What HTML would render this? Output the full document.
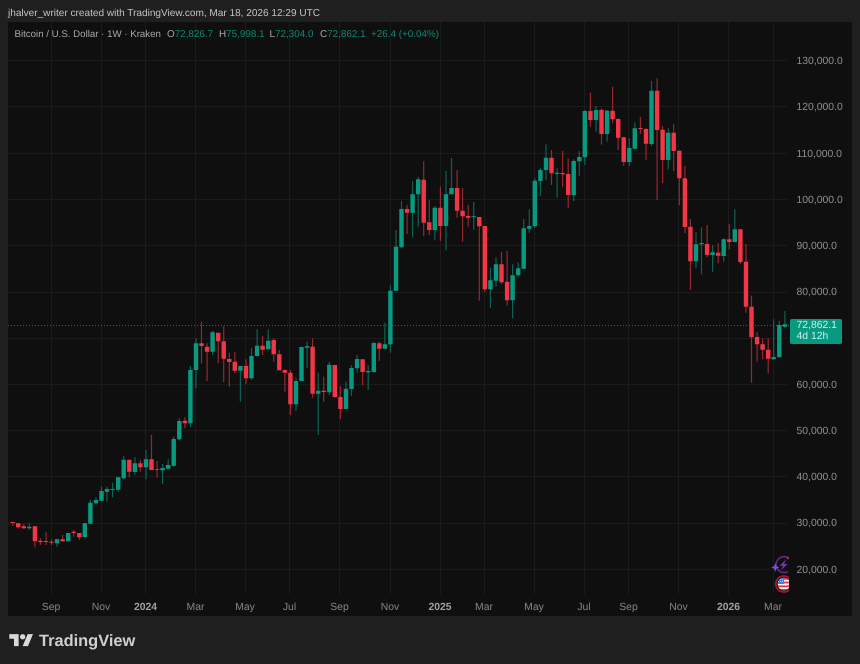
<!DOCTYPE html>
<html>
<head>
<meta charset="utf-8">
<style>
html,body{margin:0;padding:0;background:#1f1f1f;}
#root{position:relative;width:860px;height:664px;overflow:hidden;background:#1f1f1f;font-family:"Liberation Sans",sans-serif;text-rendering:geometricPrecision;}
#pane{position:absolute;left:8px;top:22px;width:844px;height:594px;background:#0f0f0f;}
svg{position:absolute;left:0;top:0;filter:blur(.35px);}
.t{position:absolute;white-space:nowrap;filter:blur(.3px);}
.top{left:8px;top:6.5px;font-size:10.05px;line-height:13px;color:#c4c4c4;}
.lg{top:28px;font-size:9.9px;line-height:13px;color:#a8a8a8;}
.g{color:#0a8a75;}
.p{left:796.5px;font-size:10.4px;line-height:13px;color:#8e8e8e;}
.x{top:601px;font-size:10.4px;line-height:13px;color:#858585;width:50px;text-align:center;}
.x b{color:#a0a0a0;}
#tag{position:absolute;left:789.5px;top:318.5px;width:52.5px;height:25px;background:#089981;border-radius:2px;}
.tg{left:796.5px;font-size:10.4px;line-height:12px;color:#c9efe6;}
#brand{left:39px;top:630.5px;font-size:16.4px;line-height:20px;font-weight:bold;color:#cfcfcf;}
</style>
</head>
<body>
<div id="root">
<div id="pane"></div>

<svg width="860" height="664" viewBox="0 0 860 664" xmlns="http://www.w3.org/2000/svg">
  <g stroke="#1b1b1b" stroke-width="1" fill="none">
    <path d="M51.5 22V594M101.5 22V594M145.5 22V594M195.5 22V594M245.5 22V594M289.5 22V594M339.5 22V594M390.5 22V594M440.5 22V594M484.5 22V594M534.5 22V594M584.5 22V594M628.5 22V594M678.5 22V594M728.5 22V594M773.5 22V594"/>
    <path d="M8 60.5H787M8 106.5H787M8 153.5H787M8 199.5H787M8 245.5H787M8 292.5H787M8 338.5H787M8 384.5H787M8 430.5H787M8 476.5H787M8 523.5H787M8 569.5H787"/>
  </g>
  <path d="M8 325.5H790" stroke="#0d7564" stroke-width="1" stroke-dasharray="1 2" fill="none"/>

  <!-- green wicks -->
  <path stroke="#089981" stroke-opacity=".6" stroke-width="1.2" fill="none" d="M29.3 523.3V530M57 539V546.7M68.2 533V541.3M84.8 523V537.3M90.4 500V524M96 497.3V504M101.5 486.7V501M107 486.7V501.7M112.6 482.7V497.3M118.2 477V491.7M123.7 455.7V479.3M134.9 457.3V475M146 450V479.3M162.6 464V484M168.2 459.3V469M173.7 436.7V466.7M179.3 418.3V440M190.4 366V426.7M196 338.3V388.3M212.6 330.7V355M240.4 366V401.7M251.5 347.7V380M257.1 329.3V356M268.2 329.3V349.3M296 378.3V411M301.5 347V381M307.1 341.7V368.3M318.2 372.7V435M329.3 361.7V395M346 381.7V409M351.5 365V396M357.1 355V372.7M368.2 365V390M373.8 341.7V372.7M384.9 322.7V348.7M390.4 285.3V352.7M396 230V290.7M401.5 201V248.3M412.6 181V237.3M418.2 176.7V226.7M434.8 206V240M446 171V250.3M451.5 158V194.3M473.7 202V230M490.4 267.7V307.7M496 257.3V286.7M512.6 264.3V318.3M518.2 262.3V276.7M523.7 219V268.7M529.3 209.3V232.7M534.8 178.3V228.3M540.4 168.3V196M546 144.3V180M557.1 168.3V197.7M573.7 159.3V201M579.3 151V176M584.8 110V165M596 106V131.7M607.1 110V141.7M629.3 138.3V166M634.8 122.3V149.3M651.5 81V146M668.2 128.3V169.3M696 232.3V268.3M701.5 227.3V274.3M712.6 245V271.7M723.7 238.3V261.7M734.8 209.3V242M773.7 319.3V360M779.3 320.7V357.3M784.9 311V328.3"/>
  <!-- red wicks -->
  <path stroke="#f23645" stroke-opacity=".6" stroke-width="1.2" fill="none" d="M12.7 522V526M18.2 523V528.7M23.8 524V529M34.9 526V547.3M40.4 538.3V545M46 531.7V545M51.5 539.3V545M62.6 535V541.7M73.7 530V536.7M79.3 533V540M129.3 459.7V477.3M140.4 460V471.7M151.5 435V470M157.1 461V477.3M184.9 417.3V428.3M201.5 321.7V363.3M207.1 343.3V381M218.2 332.7V363.3M223.7 326V382.3M229.3 352.7V386.7M234.8 351.7V373.3M246 359.3V384M262.6 336V355M273.7 338.3V361.7M279.3 350V370.3M284.9 369.3V391.7M290.4 370V415M312.6 338.3V397.7M323.7 376.7V401.7M334.8 365V397.7M340.4 386V419M362.6 359.3V385.3M379.3 341.7V361M407.1 205V234M423.7 161.3V236M429.3 200V235M440.4 186.7V241M457.1 170V217.7M462.6 188.3V241.7M468.2 205V226.7M479.3 217V300.7M484.8 226V291.7M501.5 251.7V284.3M507.1 250.7V305.7M551.5 150V185M562.6 151V186.7M568.2 158.3V207.7M590.4 92.7V126.7M601.5 108.3V144.7M612.6 86.7V123.3M618.2 118.3V150M623.7 136.7V166M640.4 116.7V134M646 128.3V160M657.1 78.3V200M662.6 126V183.3M673.7 124.3V171M679.3 150.7V205M684.9 166V233M690.4 219V290M707.1 225V257.3M718.2 243.3V263.3M729.3 224V249.3M740.4 229.3V264.3M746 244V312.7M751.5 295.7V382.7M757.1 332.3V361.7M762.6 338.3V359.3M768.2 338.3V373.3"/>
  <!-- green bodies -->
  <path stroke="#089981" stroke-width="4.4" fill="none" d="M29.3 526.7V528.3M57 539.3V543.3M68.2 533V541.3M84.8 523.3V537M90.4 502.7V523.7M96 500V503.3M101.5 491V500.7M107 489V491.7M112.6 489V490M118.2 477.3V489.7M123.7 459.7V478.3M134.9 463.3V472M146 459.3V467.3M162.6 468V470.3M168.2 465V468.7M173.7 439V465.7M179.3 421V439.3M190.4 370V423.3M196 343.3V370M212.6 332.3V351.7M240.4 366V370.7M251.5 356V378.3M257.1 345.7V356M268.2 340.7V349.3M296 381V404.3M301.5 347V381M307.1 346.3V347.7M318.2 390.7V393.7M329.3 364.7V392.3M346 388.7V409M351.5 368V389M357.1 359V368.3M368.2 371V372.3M373.8 343V372M384.9 344.3V348.7M390.4 290.7V344.3M396 246.7V290.7M401.5 209V247.3M412.6 194.3V212.7M418.2 179.3V194.3M434.8 207.7V230M446 194.3V226M451.5 188V194.3M473.7 216.3V217.3M490.4 280.3V289.3M496 264.3V280.7M512.6 275.3V300.3M518.2 268.3V275.3M523.7 228.3V268.7M529.3 226V228.7M534.8 180.7V226.3M540.4 170V181M546 157.7V170M557.1 172.7V174M573.7 161V195.3M579.3 157V161.3M584.8 111V157.3M596 110V120M607.1 110.7V134M629.3 148V162M634.8 128.3V148.7M651.5 90.7V144M668.2 132.7V160M696 244.3V261.3M701.5 243V244.3M712.6 252.3V255M723.7 239.3V256M734.8 229.3V242M773.7 357V359.3M779.3 325V357.3M784.9 324.3V326.7"/>
  <!-- red bodies -->
  <path stroke="#f23645" stroke-width="4.4" fill="none" d="M12.7 522V523M18.2 523.3V527.3M23.8 526.3V528.3M34.9 526.3V541.3M40.4 540.7V542M46 541V542M51.5 541.7V542.7M62.6 539.3V541.3M73.7 531.7V533M79.3 533V537.3M129.3 459.7V471.7M140.4 463.3V467.3M151.5 459.3V470M157.1 469V469.7M184.9 420.7V423.3M201.5 343.3V346M207.1 346.7V351.7M218.2 332.7V341.3M223.7 341.3V358.7M229.3 359V362M234.8 361.7V370.7M246 366V378.3M262.6 345.7V349.7M273.7 340V354.3M279.3 354.3V370.3M284.9 370V372.7M290.4 372.7V404.3M312.6 346.7V393.7M323.7 390.7V392M334.8 365V397M340.4 397V409M362.6 359.3V372M379.3 343.3V348.7M407.1 209V212.7M423.7 179.7V222.7M429.3 222.3V230M440.4 207.7V226M457.1 188V210.7M462.6 210.7V216.3M468.2 216V217.7M479.3 217V226.3M484.8 226V289.3M501.5 264.3V282.3M507.1 281.7V300.3M551.5 157.7V173.3M562.6 173V174.3M568.2 174V195M590.4 111V120M601.5 110V134M612.6 110.7V119.3M618.2 119V137.7M623.7 137.3V162M640.4 128V129M646 129V143.7M657.1 90.7V130M662.6 129.7V160M673.7 132.7V151M679.3 150.7V178.3M684.9 178.3V227M690.4 226.7V261.3M707.1 244V255M718.2 252.7V255.7M729.3 239.3V242M740.4 229.3V262M746 261.7V306.7M751.5 306.7V337.3M757.1 337V344.3M762.6 344.3V349.7M768.2 349.7V358.7"/>

  <!-- event icons, clipped at pane edge -->
  <defs><clipPath id="c"><rect x="770" y="552" width="19" height="44"/></clipPath></defs>
  <g clip-path="url(#c)">
    <path d="M788.5 557.9A8 8 0 1 0 788 571.6" fill="none" stroke="#5f2a85" stroke-width="1.6"/>
    <circle cx="788" cy="558" r="1.3" fill="#a8283a"/>
    <path d="M786 559.5L779.5 565.8H783L781 570.3L787.5 564H784Z" fill="#7b35b0"/>
    <path d="M775.3 563L776.3 566.3L779.5 567.5L776.3 568.6L775.3 572L774.2 568.6L771 567.5L774.2 566.3Z" fill="#7a4df0"/>
    <circle cx="783.8" cy="584" r="8" fill="#0f0f0f" stroke="#a81e2e" stroke-width="1.6"/>
    <clipPath id="f"><circle cx="784" cy="584" r="6.3"/></clipPath>
    <g clip-path="url(#f)">
      <rect x="776" y="577" width="14" height="14" fill="#f2f2f2"/>
      <rect x="776" y="578" width="14" height="1.8" fill="#e8394a"/>
      <rect x="776" y="581.6" width="14" height="1.8" fill="#e8394a"/>
      <rect x="776" y="585.4" width="14" height="1.8" fill="#e8394a"/>
      <rect x="776" y="589" width="14" height="1.8" fill="#e8394a"/>
      <rect x="776" y="577" width="8" height="7" fill="#3f7fe0"/>
      <path d="M778 579.5h5M778 581.5h5" stroke="#cfe0fa" stroke-width=".7" stroke-dasharray="1 1"/>
    </g>
  </g>

  <!-- TradingView logo -->
  <g transform="translate(9.3 631.4) scale(.667)" fill="#d9d9d9">
    <path d="M14 22H7V11H0V4h14v18zM28 22h-8l7.5-18h8L28 22z"/>
    <circle cx="20" cy="8" r="4"/>
  </g>
</svg>

<div class="t top">jhalver_writer created with TradingView.com, Mar 18, 2026 12:29 UTC</div>

<div class="t lg" style="left:14.5px;font-size:9.7px">Bitcoin / U.S. Dollar · 1W · Kraken</div>
<div class="t lg" style="left:167px">O<span class="g">72,826.7</span></div>
<div class="t lg" style="left:219px">H<span class="g">75,998.1</span></div>
<div class="t lg" style="left:269.5px">L<span class="g">72,304.0</span></div>
<div class="t lg" style="left:320px">C<span class="g">72,862.1</span></div>
<div class="t lg g" style="left:371px">+26.4 (+0.04%)</div>

<div class="t p" style="top:55px">130,000.0</div>
<div class="t p" style="top:101px">120,000.0</div>
<div class="t p" style="top:148px">110,000.0</div>
<div class="t p" style="top:194px">100,000.0</div>
<div class="t p" style="top:240px">90,000.0</div>
<div class="t p" style="top:286px">80,000.0</div>
<div class="t p" style="top:379px">60,000.0</div>
<div class="t p" style="top:425px">50,000.0</div>
<div class="t p" style="top:471px">40,000.0</div>
<div class="t p" style="top:517px">30,000.0</div>
<div class="t p" style="top:564px">20,000.0</div>

<div id="tag"></div>
<div class="t tg" style="top:319.5px">72,862.1</div>
<div class="t tg" style="top:330.5px">4d 12h</div>

<div class="t x" style="left:26px">Sep</div>
<div class="t x" style="left:76px">Nov</div>
<div class="t x" style="left:120.5px"><b>2024</b></div>
<div class="t x" style="left:170.5px">Mar</div>
<div class="t x" style="left:220px">May</div>
<div class="t x" style="left:264.5px">Jul</div>
<div class="t x" style="left:314.5px">Sep</div>
<div class="t x" style="left:365px">Nov</div>
<div class="t x" style="left:415px"><b>2025</b></div>
<div class="t x" style="left:459px">Mar</div>
<div class="t x" style="left:509px">May</div>
<div class="t x" style="left:559px">Jul</div>
<div class="t x" style="left:603.5px">Sep</div>
<div class="t x" style="left:653.5px">Nov</div>
<div class="t x" style="left:703.5px"><b>2026</b></div>
<div class="t x" style="left:748px">Mar</div>

<div class="t" id="brand">TradingView</div>
</div>
</body>
</html>
